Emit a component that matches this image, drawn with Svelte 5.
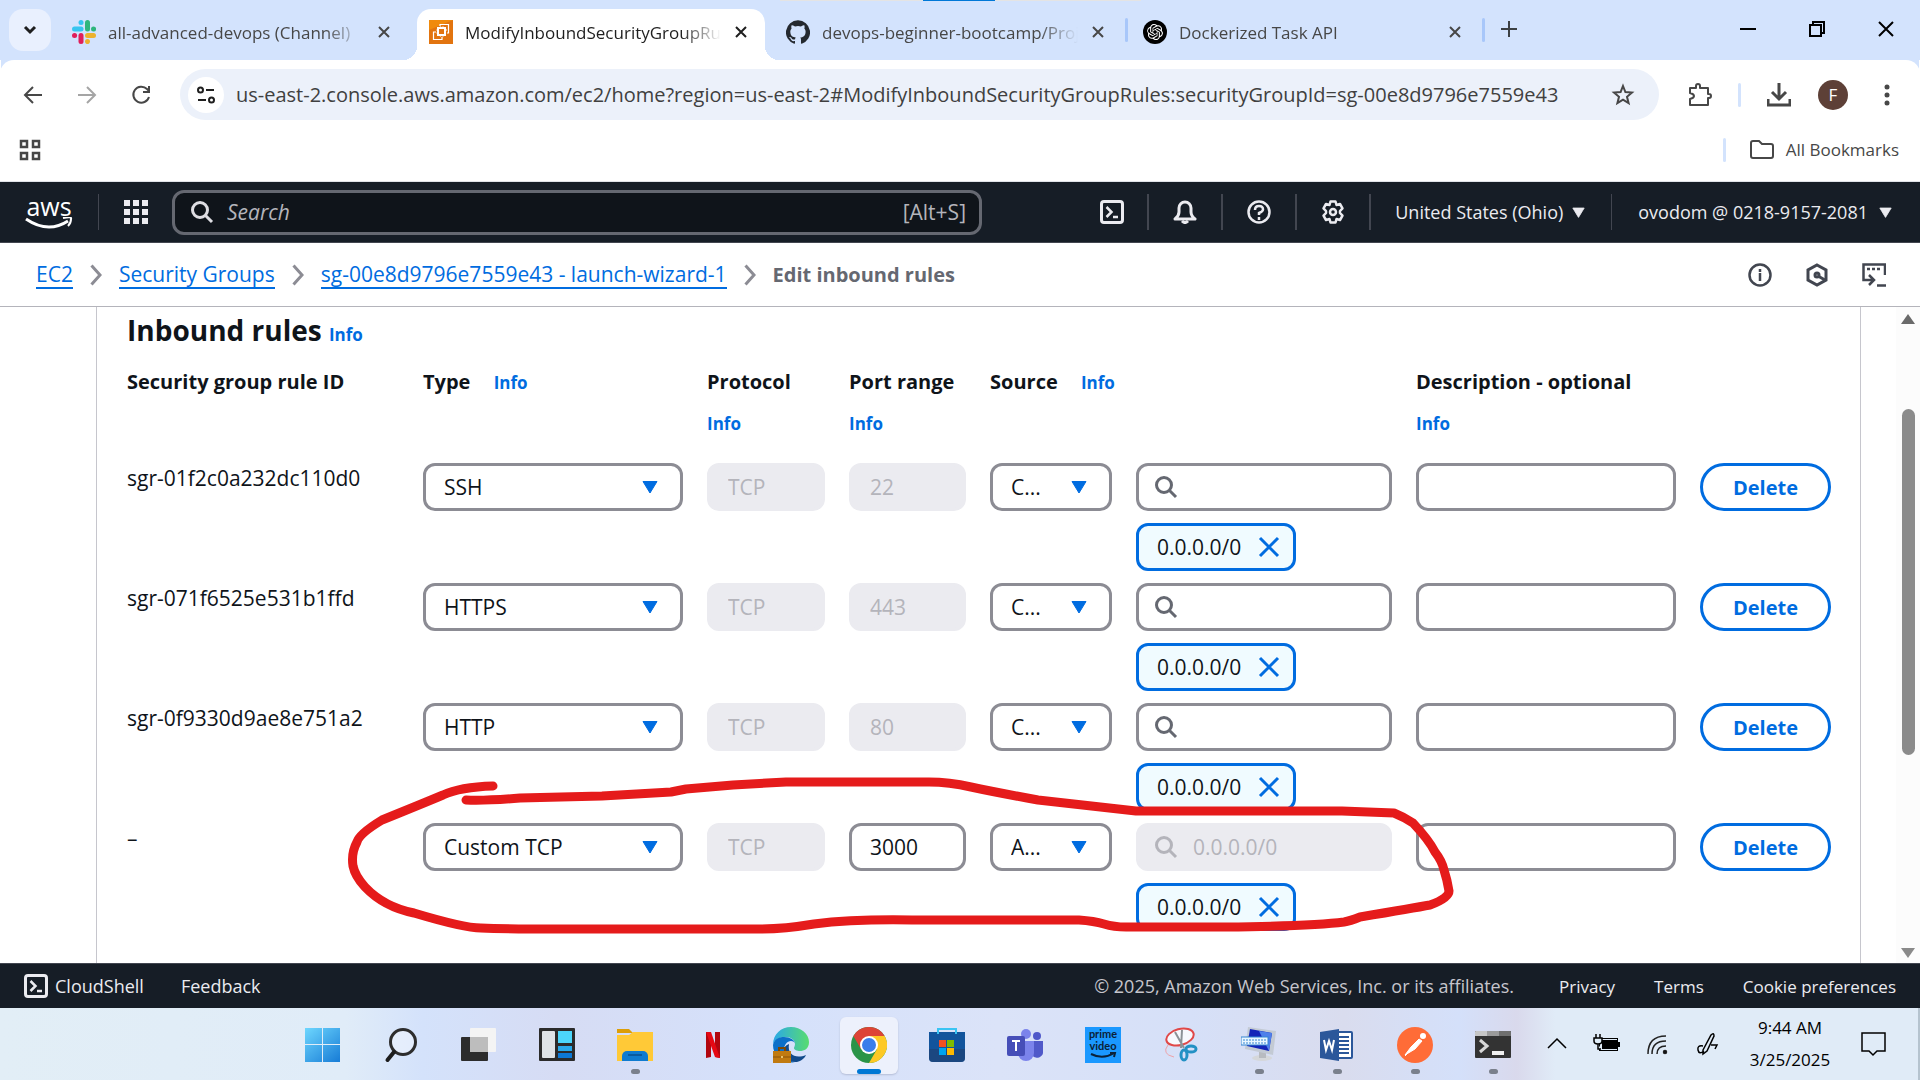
<script>
  const tabs = [
    { title: 'all-advanced-devops (Channel)', icon: 'slack', active: false, sep: false },
    { title: 'ModifyInboundSecurityGroupRules', icon: 'ec2', active: true, sep: false },
    { title: 'devops-beginner-bootcamp/Projects', icon: 'github', active: false, sep: true },
    { title: 'Dockerized Task API', icon: 'openai', active: false, sep: true }
  ];
  const url =
    'us-east-2.console.aws.amazon.com/ec2/home?region=us-east-2#ModifyInboundSecurityGroupRules:securityGroupId=sg-00e8d9796e7559e43';

  const rules = [
    { id: 'sgr-01f2c0a232dc110d0', type: 'SSH', port: '22', source: 'C...', custom: false },
    { id: 'sgr-071f6525e531b1ffd', type: 'HTTPS', port: '443', source: 'C...', custom: false },
    { id: 'sgr-0f9330d9ae8e751a2', type: 'HTTP', port: '80', source: 'C...', custom: false },
    { id: '–', type: 'Custom TCP', port: '3000', source: 'A...', custom: true }
  ];

  const apps = [
    { name: 'Start', icon: 'start' },
    { name: 'Search', icon: 'find' },
    { name: 'Task view', icon: 'taskview' },
    { name: 'Widgets', icon: 'widgets' },
    { name: 'File Explorer', icon: 'explorer', open: true },
    { name: 'Netflix', icon: 'netflix' },
    { name: 'Edge', icon: 'edge' },
    { name: 'Chrome', icon: 'chrome', current: true },
    { name: 'Store', icon: 'store' },
    { name: 'Teams', icon: 'teams' },
    { name: 'Prime Video', icon: 'prime' },
    { name: 'Snipping Tool', icon: 'snip' },
    { name: 'On-Screen Keyboard', icon: 'osk', open: true },
    { name: 'Word', icon: 'word', open: true },
    { name: 'Postman', icon: 'postman', open: true },
    { name: 'Terminal', icon: 'terminal', open: true }
  ];
</script>

{#snippet cross()}
  <svg class="i16" viewBox="0 0 16 16"><path d="M3 3l10 10M13 3L3 13" fill="none" stroke="currentColor" stroke-width="2" /></svg>
{/snippet}

{#snippet favicon(kind)}
  <svg class="i24" viewBox="0 0 24 24">
    {#if kind === 'slack'}
      <g fill="none" stroke-width="5" stroke-linecap="round">
        <path d="M9 9H2.500" stroke="#36c5f0" /><path d="M9 2.500v.1" stroke="#36c5f0" />
        <path d="M15.500 9V2.500" stroke="#2eb67d" /><path d="M21.500 9h.1" stroke="#2eb67d" />
        <path d="M15.500 15.500h6" stroke="#ecb22e" /><path d="M15.500 21.500v.1" stroke="#ecb22e" />
        <path d="M9 15.500v6" stroke="#e01e5a" /><path d="M2.500 15.500h.1" stroke="#e01e5a" />
      </g>
    {:else if kind === 'ec2'}
      <rect width="24" height="24" fill="#f08a0c" />
      <path d="M0 24V10L24 0v24z" fill="#d86613" opacity=".6" />
      <g fill="none" stroke="#fff" stroke-width="1.200">
        <rect x="9" y="8" width="7" height="7" stroke-width="2" />
        <path d="M11 6V4.500h8.500V13H18M7 12H4.500v7.500H13V17M11.500 8V6.500M14 8V6.500M11.500 15v1.500M14 15v1.500M7.500 10H9M7.500 13H9M16.500 10H18" />
      </g>
    {:else if kind === 'github'}
      <path fill="#24292f" d="M12 .3a12 12 0 0 0-3.800 23.400c.6.1.8-.3.8-.6v-2c-3.300.7-4-1.600-4-1.600-.6-1.400-1.400-1.800-1.400-1.800-1-.7.1-.7.1-.7 1.200 0 1.900 1.200 1.900 1.200 1 1.800 2.800 1.300 3.500 1 0-.8.4-1.300.7-1.600-2.700-.3-5.500-1.300-5.500-6 0-1.200.5-2.300 1.300-3.100-.2-.4-.6-1.600 0-3.200 0 0 1-.3 3.400 1.200a11.500 11.500 0 0 1 6 0c2.300-1.500 3.300-1.200 3.300-1.200.6 1.600.2 2.800 0 3.200.9.8 1.300 1.900 1.300 3.200 0 4.600-2.800 5.600-5.500 5.900.5.4.9 1 .9 2.200v3.300c0 .3.1.7.8.6A12 12 0 0 0 12 .3" />
    {:else}
      <circle cx="12" cy="12" r="12" fill="#000" />
      <path transform="translate(4 4) scale(.667)" fill="#fff" d="M22.282 9.821a5.985 5.985 0 0 0-.516-4.910 6.046 6.046 0 0 0-6.510-2.900A6.065 6.065 0 0 0 4.981 4.182a5.985 5.985 0 0 0-3.998 2.900 6.046 6.046 0 0 0 .743 7.097 5.980 5.980 0 0 0 .510 4.911 6.051 6.051 0 0 0 6.515 2.900A5.985 5.985 0 0 0 13.260 24a6.056 6.056 0 0 0 5.772-4.206 5.990 5.990 0 0 0 3.998-2.900 6.056 6.056 0 0 0-.748-7.073zM13.260 22.430a4.476 4.476 0 0 1-2.876-1.040l.141-.081 4.779-2.758a.795.795 0 0 0 .393-.681v-6.737l2.020 1.169a.071.071 0 0 1 .038.052v5.583a4.504 4.504 0 0 1-4.495 4.493zM3.600 18.304a4.471 4.471 0 0 1-.535-3.014l.142.085 4.783 2.759a.771.771 0 0 0 .780 0l5.843-3.369v2.332a.080.080 0 0 1-.033.062L9.740 19.950a4.499 4.499 0 0 1-6.140-1.646zM2.340 7.896a4.485 4.485 0 0 1 2.366-1.973V11.600a.766.766 0 0 0 .388.677l5.815 3.354-2.020 1.169a.076.076 0 0 1-.071 0l-4.830-2.787A4.504 4.504 0 0 1 2.340 7.872zm16.597 3.855l-5.833-3.387L15.119 7.200a.076.076 0 0 1 .071 0l4.830 2.791a4.494 4.494 0 0 1-.676 8.105v-5.678a.790.790 0 0 0-.407-.667zm2.010-3.023l-.141-.085-4.774-2.782a.776.776 0 0 0-.785 0L9.409 9.230V6.897a.066.066 0 0 1 .028-.061l4.830-2.787a4.499 4.499 0 0 1 6.680 4.660zm-12.640 4.135l-2.020-1.164a.080.080 0 0 1-.038-.057V6.075a4.499 4.499 0 0 1 7.376-3.454l-.142.081L8.704 5.460a.795.795 0 0 0-.393.681zm1.097-2.365l2.602-1.500 2.607 1.500v2.999l-2.597 1.500-2.607-1.500z" />
    {/if}
  </svg>
{/snippet}

{#snippet shell()}
  <svg class="i24" viewBox="0 0 24 24" fill="none" stroke="currentColor" stroke-width="3">
    <rect x="1.500" y="1.500" width="21" height="21" rx="2.500" />
    <path d="M6.500 7l5 5-5 5M13 17h5" stroke-width="2.500" />
  </svg>
{/snippet}

{#snippet lens()}
  <svg class="i24" viewBox="0 0 24 24" fill="none" stroke="currentColor" stroke-width="3"><circle cx="10" cy="10" r="7.500" /><path d="M15.500 15.500L22 22" /></svg>
{/snippet}

{#snippet caret()}
  <svg class="i16" viewBox="0 0 16 16" aria-hidden="true"><path d="M1 2.500h14L8 14z" fill="currentColor" stroke="currentColor" stroke-linejoin="round" /></svg>
{/snippet}

{#snippet chevron()}
  <svg class="chev" viewBox="0 0 12 22" aria-hidden="true"><path d="M1.500 1.500L10 11l-8.500 9.500" fill="none" stroke="#8c8c94" stroke-width="3" /></svg>
{/snippet}

{#snippet appIcon(kind)}
  <svg class="i36" viewBox="0 0 36 36">
    {#if kind === 'start'}
      <defs><linearGradient id="win" gradientUnits="userSpaceOnUse" x1="0" y1="0" x2="30" y2="36"><stop offset="0" stop-color="#6fd8ff" /><stop offset="1" stop-color="#1b80d8" /></linearGradient></defs>
      <path d="M0 1h17v16H0zM18 1h17v16H18zM0 18h17v17H0zM18 18h17v17H18z" fill="url(#win)" />
    {:else if kind === 'find'}
      <circle cx="20" cy="15" r="12.500" fill="#fff" fill-opacity=".35" stroke="#2d2d2d" stroke-width="3" /><path d="M11 25l-6.500 8" stroke="#1d1d1d" stroke-width="4" stroke-linecap="round" />
    {:else if kind === 'taskview'}
      <rect y="10" width="27" height="24" rx="1" fill="#2c2c2c" /><rect x="9" y="1" width="26" height="24" rx="1" fill="#f4f4f4" /><path d="M9 10h18v15H9z" fill="#bdbdbd" />
    {:else if kind === 'widgets'}
      <rect y="1" width="36" height="33" rx="1" fill="#2b2b2b" /><rect x="3" y="4" width="13" height="27" rx="1" fill="#dfe3e6" /><path d="M19 4h14v12H19z" fill="#4cd6fb" /><path d="M19 19h14v5H19z" fill="#29a9ea" /><path d="M19 26h14v5H19z" fill="#0c78d5" />
    {:else if kind === 'explorer'}
      <path d="M0 2h12l4 4H0z" fill="#dd9e08" /><path d="M0 8h12l4-3h20v29H0z" fill="#ffc937" /><path d="M5 34v-5a5 5 0 0 1 5-5h16a5 5 0 0 1 5 5v5z" fill="#0f7bd0" /><path d="M11 28h14" stroke="#0a5a9f" stroke-width="2" />
    {:else if kind === 'netflix'}
      <path d="M11 5h5v25l-5 1z" fill="#b1060f" /><path d="M20 5h5v26l-5-1z" fill="#b1060f" /><path d="M11 5h5l9 26-5-1z" fill="#e50914" />
    {:else if kind === 'edge'}
      <defs><linearGradient id="eg" x1="0" y1="0" x2="1" y2="0"><stop offset="0" stop-color="#2aa8e8" /><stop offset="1" stop-color="#58dc70" /></linearGradient></defs>
      <path d="M0 18C0 7 8 0 18 0s18 7 18 15c0 7-5 9-9 9-3 0-6-1-6-3 0-1 1-2 1-4 0-4-4-7-9-7C7 10 1 12 0 18z" fill="url(#eg)" />
      <path d="M0 18c1-6 6-8 11-8 6 0 11 3 11 7 0-2-2-3-4-3-4 0-7 4-7 9 0 6 4 11 11 12C10 38 0 29 0 18z" fill="#0c6fc8" />
      <path d="M11 23c0 7 5 13 13 12 4-1 8-4 9-7-10 4-19 0-17-11-3 1-5 3-5 6z" fill="#114a8b" />
      <path d="M0 24h18v12H0z" fill="#c07a10" /><path d="M6 24v-3h6v3" fill="none" stroke="#7a4604" stroke-width="2" /><path d="M0 30h18" stroke="#8a5208" /><circle cx="9" cy="30" r="1" fill="#ffe08a" />
    {:else if kind === 'chrome'}
      <circle cx="18" cy="18" r="18" fill="#2a9448" />
      <path d="M2.400 9A18 18 0 0 1 33.600 9H18l-7.800 13.500z" fill="#dd4436" /><path d="M33.600 9A18 18 0 0 1 18 36l7.800-13.500L18 9z" fill="#fdc925" /><circle cx="18" cy="18" r="9" fill="#fff" /><circle cx="18" cy="18" r="7" fill="#3a7dea" />
    {:else if kind === 'store'}
      <path d="M0 5h36v26a4 4 0 0 1-4 4H4a4 4 0 0 1-4-4z" fill="#12549c" /><path d="M0 22h36v9a4 4 0 0 1-4 4H4a4 4 0 0 1-4-4z" fill="#22406e" opacity=".6" /><path d="M9 7V2h18v5" fill="none" stroke="#3ac4f3" stroke-width="2" />
      <path d="M10 13h7v7h-7z" fill="#f25022" /><path d="M18 13h7v7h-7z" fill="#7fba00" /><path d="M10 21h7v7h-7z" fill="#00a4ef" /><path d="M18 21h7v7h-7z" fill="#ffb900" />
    {:else if kind === 'teams'}
      <circle cx="30" cy="9" r="4" fill="#5059c9" /><circle cx="19" cy="7" r="5" fill="#7b83eb" /><path d="M25 14h11v10a6 6 0 0 1-11 4z" fill="#5059c9" /><path d="M11 14h16v12a8 8 0 0 1-16 0z" fill="#7b83eb" /><rect y="9" width="18" height="20" rx="2" fill="#464eb8" /><path d="M5 14h8M9 14v10" stroke="#fff" stroke-width="2" />
    {:else if kind === 'prime'}
      <rect width="36" height="36" fill="#1a98ff" /><text x="18" y="11" class="ptext">prime</text><text x="18" y="23" class="ptext">video</text><path d="M6 27q12 6 23-1M25 26h5l-1 4" fill="none" stroke="#0b2239" stroke-width="2" />
    {:else if kind === 'snip'}
      <ellipse cx="17" cy="10" rx="14" ry="8" fill="#fff" fill-opacity=".8" stroke="#e04848" stroke-width="2" transform="rotate(-15 17 10)" /><path d="M5 18q-7 9 6 12" fill="none" stroke="#eea2a8" />
      <path d="M12 5l9 16M19 3l-1 18" stroke="#8c9297" stroke-width="2" /><g fill="none" stroke="#2391c4" stroke-width="3"><ellipse cx="21" cy="28" rx="3" ry="5" /><ellipse cx="28" cy="22" rx="5" ry="3" /></g>
    {:else if kind === 'osk'}
      <ellipse cx="21" cy="31" rx="10" ry="3" fill="#d5d7da" /><path d="M18 25h7v6h-7z" fill="#b8bbc0" /><path d="M7 0l28 4-3 24L4 22z" fill="#c3cad4" /><path d="M9 2l22 4-3 18L6 19z" fill="#1424b8" /><path d="M18 4l13 2-3 18z" fill="#4f80ea" /><rect y="10" width="27" height="8" fill="#e9f6ff" stroke="#3486d2" /><path d="M2 13h23M2 16h23" stroke="#3486d2" stroke-dasharray="2 1" />
    {:else if kind === 'word'}
      <rect x="15" y="5" width="18" height="26" rx="1" fill="#fff" stroke="#2b579a" stroke-width="2" /><path d="M20 10h10M20 14h10M20 18h10M20 22h10M20 26h10" stroke="#2b579a" stroke-width="2" /><path d="M1 5l19-3v32L1 31z" fill="#2b579a" /><path d="M5 13l2 10 3-9 3 9 2-10" fill="none" stroke="#fff" stroke-width="2" />
    {:else if kind === 'postman'}
      <circle cx="18" cy="18" r="18" fill="#ff6c37" /><circle cx="26" cy="9" r="3" fill="#fff" /><path d="M22 12l3 2-7 8-10 6 6-8zM17 20l-9 9" fill="#fff" stroke="#fff" />
    {:else}
      <rect y="4" width="36" height="27" rx="1" fill="#333" /><path d="M0 9V5q0-1 1-1h11v5z" fill="#c6c6c6" /><path d="M12 4h12v5H12z" fill="#9a9a9a" /><path d="M24 4h11q1 0 1 1v4H24z" fill="#6f6f6f" /><path d="M5 13l7 6-7 6" fill="none" stroke="#d8d8d8" stroke-width="3" /><path d="M17 24h12v4H17z" fill="#f0f0f0" />
    {/if}
  </svg>
{/snippet}

<div class="screen">
  <div class="notch" aria-hidden="true"></div>
  <div class="tabstrip">
    <button class="tabmenu" aria-label="Search tabs">
      <svg class="i16" viewBox="0 0 16 16"><path d="M3 5l5 5 5-5" fill="none" stroke="#1f1f1f" stroke-width="3" /></svg>
    </button>
    {#each tabs as t}
      <div class="tab" class:active={t.active} class:sep={t.sep}>
        {@render favicon(t.icon)}
        <span class="title">{t.title}</span>
        <button class="tabclose" aria-label="Close tab">{@render cross()}</button>
      </div>
    {/each}
    <button class="newtab" aria-label="New tab"><svg class="i16" viewBox="0 0 16 16"><path d="M8 0v16M0 8h16" stroke="#3c4043" stroke-width="2" /></svg></button>
    <div class="wincontrols">
      <button aria-label="Minimize"><svg class="i16" viewBox="0 0 16 16"><path d="M0 8h16" stroke="#000" stroke-width="2" /></svg></button>
      <button aria-label="Restore"><svg class="i16" viewBox="0 0 16 16"><path d="M1 4h11v11H1zM4 4V1h11v11h-3" fill="none" stroke="#000" stroke-width="2" /></svg></button>
      <button aria-label="Close"><svg class="i16" viewBox="0 0 16 16"><path d="M1 1l14 14M15 1L1 15" stroke="#000" stroke-width="2" /></svg></button>
    </div>
  </div>

  <div class="toolbar">
    <button class="nav" aria-label="Back"><svg class="i24" viewBox="0 0 24 24"><path d="M21 12H4M12 4l-8 8 8 8" fill="none" stroke="#474747" stroke-width="2" /></svg></button>
    <button class="nav" aria-label="Forward"><svg class="i24" viewBox="0 0 24 24"><path d="M3 12h17M12 4l8 8-8 8" fill="none" stroke="#a5a5a5" stroke-width="2" /></svg></button>
    <button class="nav" aria-label="Reload"><svg class="i24" viewBox="0 0 24 24"><path d="M20 14a8 8 0 1 1-2-8l2 2M20 3v6h-6" fill="none" stroke="#474747" stroke-width="2" /></svg></button>
    <div class="omnibox">
      <button class="site" aria-label="Site information"><svg class="i20" viewBox="0 0 20 20" fill="none" stroke="#1f1f1f" stroke-width="2"><circle cx="4.500" cy="5" r="2.500" /><path d="M10 5h8M2 15h8" /><circle cx="15.500" cy="15" r="2.500" /></svg></button>
      <input class="url" type="text" aria-label="Address" value={url} />
      <button class="star" aria-label="Bookmark this tab"><svg class="i24" viewBox="0 0 24 24"><path d="M12 3l2.400 6 6.600.5-5 4.300 1.600 6.400-5.600-3.500-5.600 3.500L8 13.800 3 9.500 9.600 9z" fill="none" stroke="#474747" stroke-width="2" /></svg></button>
    </div>
    <div class="tools">
      <button class="nav" aria-label="Extensions"><svg class="i24" viewBox="0 0 24 24"><path d="M2 5h6V3a2 2 0 0 1 4 0v2h8v6h1a2 2 0 0 1 0 4h-1v7H2v-6q4-1 4-3t-4-3z" fill="none" stroke="#474747" stroke-width="2" stroke-linejoin="round" /></svg></button>
      <span class="bar"></span>
      <button class="nav" aria-label="Downloads"><svg class="i24" viewBox="0 0 24 24"><path d="M12 0v15M5 9l7 7 7-7M1 16v6h22v-6" fill="none" stroke="#474747" stroke-width="3" /></svg></button>
      <button class="nav" aria-label="Profile"><span class="avatar">F</span></button>
      <button class="nav" aria-label="Menu"><svg class="i24" viewBox="0 0 24 24" fill="#474747"><circle cx="12" cy="4" r="2.500" /><circle cx="12" cy="12" r="2.500" /><circle cx="12" cy="20" r="2.500" /></svg></button>
    </div>
  </div>

  <div class="bookmarks">
    <button aria-label="Apps"><svg class="i24" viewBox="0 0 24 24"><path d="M3 3h6v6H3zM15 3h6v6h-6zM3 15h6v6H3zM15 15h6v6h-6z" fill="none" stroke="#474747" stroke-width="2.500" /></svg></button>
    <span class="bar push"></span>
    <button class="allbm"><svg class="i24" viewBox="0 0 24 24"><path d="M1 5q0-2 2-2h6l3 3h9q2 0 2 2v10q0 2-2 2H3q-2 0-2-2z" fill="none" stroke="#474747" stroke-width="2" /></svg>All Bookmarks</button>
  </div>

  <header class="aws">
    <a class="logo" href="#home" aria-label="AWS home">
      <span>aws</span>
      <svg viewBox="0 0 48 12"><path d="M1 2q22 15 42 2" fill="none" stroke="#fff" stroke-width="3" /><path d="M38 1q9-2 8 1 0 4-3 7" fill="none" stroke="#fff" stroke-width="2" /></svg>
    </a>
    <span class="vline"></span>
    <button class="grid9" aria-label="Services"><svg class="i24" viewBox="0 0 24 24"><path d="M0 0h6v6H0zM9 0h6v6H9zM18 0h6v6h-6zM0 9h6v6H0zM9 9h6v6H9zM18 9h6v6h-6zM0 18h6v6H0zM9 18h6v6H9zM18 18h6v6h-6z" fill="currentColor" /></svg></button>
    <label class="search">
      {@render lens()}
      <input type="text" aria-label="Search" placeholder="Search" />
      <span>[Alt+S]</span>
    </label>
    <div class="acts">
      <button class="act" aria-label="CloudShell">{@render shell()}</button>
      <button class="act" aria-label="Notifications"><svg class="i24" viewBox="0 0 24 24" fill="none" stroke="currentColor" stroke-width="3"><path d="M2 19q4-3 4-7V8a6 6 0 0 1 12 0v4q0 4 4 7z" stroke-linejoin="round" /><path d="M9 21q3 3 6 0" /></svg></button>
      <button class="act" aria-label="Help"><svg class="i24" viewBox="0 0 24 24" fill="none" stroke="currentColor" stroke-width="2.500"><circle cx="12" cy="12" r="10.500" /><path d="M8 10q0-4 4-4t4 3.500q0 2-4 3.500v2M12 17v3" /></svg></button>
      <button class="act" aria-label="Settings"><svg class="i24" viewBox="0 0 24 24" fill="none" stroke="currentColor" stroke-width="2.500" stroke-linejoin="round"><path d="M9.500 1.500h5l1 3.500 3.500-1 2.500 4.300-2.500 2.700v2l2.500 2.700-2.500 4.300-3.500-1-1 3.500h-5l-1-3.500-3.500 1-2.500-4.300L5 13v-2L2.500 8.300 5 4l3.500 1z" /><circle cx="12" cy="12" r="3" /></svg></button>
      <button class="menu region">United States (Ohio) {@render caret()}</button>
      <button class="menu account">ovodom @ 0218-9157-2081 {@render caret()}</button>
    </div>
  </header>

  <nav class="crumbs">
    <a href="#ec2">EC2</a>{@render chevron()}
    <a href="#groups">Security Groups</a>{@render chevron()}
    <a href="#group">sg-00e8d9796e7559e43 - launch-wizard-1</a>{@render chevron()}
    <strong>Edit inbound rules</strong>
    <div class="side">
      <button aria-label="Info panel"><svg class="i24" viewBox="0 0 24 24" fill="none" stroke="currentColor" stroke-width="2.500"><circle cx="12" cy="12" r="10.500" /><path d="M12 10v8M12 6v3" /></svg></button>
      <button aria-label="Diagnostics"><svg class="i24" viewBox="0 0 24 24" fill="none" stroke="currentColor" stroke-width="3"><path d="M12 2l9 5v10l-9 5-9-5V7z" /><circle cx="12" cy="12" r="2" /><path d="M13 13l7 4" /></svg></button>
      <button aria-label="Open shell"><svg class="i24" viewBox="0 0 24 24" fill="none" stroke="currentColor" stroke-width="2.500"><path d="M23 12V1.500H1.500V17H12M7 12l5 5-5 5M15 22.500h9M5 6h3M10 6h3M15 6h3" /></svg></button>
    </div>
  </nav>

  <main>
    <section class="panel">
      <h2>Inbound rules <a href="#info">Info</a></h2>
      <table>
        <colgroup>
          <col class="c1" /><col class="c2" /><col class="c3" /><col class="c4" /><col class="c5" /><col class="c6" /><col class="c7" /><col class="c8" />
        </colgroup>
        <thead>
          <tr>
            <th>Security group rule ID</th>
            <th>Type <a class="inl" href="#type">Info</a></th>
            <th>Protocol <a class="below" href="#protocol">Info</a></th>
            <th>Port range <a class="below" href="#port">Info</a></th>
            <th colspan="2">Source <a class="inl" href="#source">Info</a></th>
            <th>Description - optional <a class="below" href="#description">Info</a></th>
            <th></th>
          </tr>
        </thead>
        <tbody>
          {#each rules as r}
            <tr>
              <td class="rid">{r.id}</td>
              <td><div class="sel"><select aria-label="Type"><option>{r.type}</option></select>{@render caret()}</div></td>
              <td><input class="box" type="text" aria-label="Protocol" value="TCP" disabled /></td>
              <td><input class="box" type="text" aria-label="Port range" value={r.port} disabled={!r.custom} /></td>
              <td><div class="sel"><select aria-label="Source type"><option>{r.source}</option></select>{@render caret()}</div></td>
              <td>
                <div class="cidr" class:off={r.custom}>{@render lens()}<input type="text" aria-label="Source" placeholder={r.custom ? '0.0.0.0/0' : ''} disabled={r.custom} /></div>
                <div class="chip">0.0.0.0/0<button aria-label="Remove 0.0.0.0/0"><svg class="i24" viewBox="0 0 24 24"><path d="M3 3l18 18M21 3L3 21" stroke="currentColor" stroke-width="3" /></svg></button></div>
              </td>
              <td><input class="box" type="text" aria-label="Description" /></td>
              <td><button class="del">Delete</button></td>
            </tr>
          {/each}
        </tbody>
      </table>
      <svg class="ink" viewBox="0 0 1110 160" aria-hidden="true">
        <path d="M149 11Q116 12 99 20Q80 28 38 45Q15 59 13 67Q7 78 9 91Q11 101 21 112Q40 132 70 138Q120 153 137 153Q160 154 213 154H417Q440 154 470 149Q510 144 568 145H735Q750 146 760 149Q770 152 782 152H882Q970 151 1000 147Q1006 146 1016 142Q1070 133 1086 130Q1105 123 1105 116Q1103 104 1100 95Q1098 86 1091 77Q1085 65 1069 48Q1060 42 1050 38L998 36H792L694 25Q650 17 627 12Q605 7 585 7H442L389 10L342 14L327 17L258 21L176 23Q140 26 122 25" fill="none" stroke="#e51b1b" stroke-width="9" stroke-linecap="round" stroke-linejoin="round" />
      </svg>
    </section>
    <div class="scroll" aria-hidden="true">
      <svg class="i16" viewBox="0 0 16 16"><path d="M8 3L1 13h14z" fill="#6a6a6a" /></svg>
      <span></span>
      <svg class="i16" viewBox="0 0 16 16"><path d="M8 13L1 3h14z" fill="#8a8a8a" /></svg>
    </div>
  </main>

  <footer>
    <button class="cs">{@render shell()}CloudShell</button>
    <button>Feedback</button>
    <span class="copy">© 2025, Amazon Web Services, Inc. or its affiliates.</span>
    <a href="#privacy">Privacy</a>
    <a href="#terms">Terms</a>
    <a href="#cookies">Cookie preferences</a>
  </footer>

  <div class="taskbar">
    <div class="apps">
      {#each apps as a}
        <button class="app" class:open={a.open} class:current={a.current} aria-label={a.name}>{@render appIcon(a.icon)}</button>
      {/each}
    </div>
    <div class="tray">
      <button aria-label="Hidden icons"><svg class="i24" viewBox="0 0 24 24"><path d="M3 16l9-9 9 9" fill="none" stroke="#000" stroke-width="1.500" /></svg></button>
      <button aria-label="Battery"><svg class="i28" viewBox="0 0 28 28"><rect x="6.500" y="8.500" width="18" height="12" fill="none" stroke="#000" /><path d="M9 10h15v9H9zM25 12h2v5h-2z" /><path d="M3 4v4M7 4v4M1 8h8v3q0 3-4 3t-4-3zM5 14v5h3" fill="#e0edf8" stroke="#000" stroke-width="1.500" /></svg></button>
      <button aria-label="Network"><svg class="i24" viewBox="0 0 24 24" fill="none" stroke="#222" stroke-width="1.500"><path d="M3 22Q3 4 21 4M7 22Q7 9 21 9M12 22q0-8 9-8" /><circle cx="20" cy="20" r="1.500" fill="#000" /></svg></button>
      <button aria-label="Pen"><svg class="i24" viewBox="0 0 24 24" fill="none" stroke="#000" stroke-width="1.500"><path d="M8 18L16 3q3-3 3 1l-7 15-4 3zM8 14q-6-1-5 4t6 1M16 13h6l-2 4" /></svg></button>
      <div class="clock"><span>9:44 AM</span><span>3/25/2025</span></div>
      <button aria-label="Notifications"><svg class="i28" viewBox="0 0 28 28"><path d="M3 3h23v18h-8l-4 4-4-4H3z" fill="none" stroke="#000" stroke-width="1.500" /></svg></button>
    </div>
  </div>
</div>

<style>
  :global(body) { margin: 0; background: #fff; }
  .screen { min-height: 100vh; display: flex; flex-direction: column; font-family: 'Open Sans', 'Noto Sans', sans-serif; font-size: 21px; color: #0f141a; background: #fff; }
  .screen * { box-sizing: border-box; }
  button, input, select { font: inherit; color: inherit; background: none; border: 0; padding: 0; margin: 0; outline: 0; }
  button { display: inline-flex; align-items: center; justify-content: center; }
  svg { flex: none; display: block; }
  a { color: #006ce0; text-decoration: none; }
  .i16 { width: 16px; height: 16px; }
  .i20 { width: 20px; height: 20px; }
  .i24 { width: 24px; height: 24px; }
  .i28 { width: 28px; height: 28px; }
  .i36 { width: 36px; height: 36px; }

  .notch { position: absolute; z-index: 2; top: 0; left: 780px; width: 361px; height: 1px; background: linear-gradient(90deg, #e4e4e4 143px, #0078d7 143px 215px, #e4e4e4 215px); }
  .tabstrip { position: relative; z-index: 1; display: flex; height: 60px; background: #d3e3fd; padding: 9px 0 0 9px; }
  .tabmenu { width: 42px; height: 42px; border-radius: 14px; background: #e9f0fe; margin-right: 9px; }
  .tab { position: relative; display: flex; align-items: center; width: 348px; height: 51px; margin-right: 9px; padding: 0 16px 5px 12px; gap: 12px; font-size: 17px; color: #474747; border-radius: 14px 14px 0 0; }
  .tab.active { background: #fff; color: #1f1f1f; }
  .tab.active::before, .tab.active::after { content: ''; position: absolute; bottom: 0; width: 14px; height: 14px; }
  .tab.active::before { left: -14px; background: radial-gradient(circle at 0 0, transparent 14px, #fff 14px); }
  .tab.active::after { right: -14px; background: radial-gradient(circle at 100% 0, transparent 14px, #fff 14px); }
  .tab.sep::after { content: ''; position: absolute; right: -6px; top: 9px; width: 3px; height: 24px; border-radius: 2px; background: #a8c7fa; }
  .title { flex: 1; overflow: hidden; white-space: nowrap; mask-image: linear-gradient(90deg, #000 calc(100% - 40px), transparent); }
  .newtab { width: 42px; height: 42px; padding-bottom: 3px; }
  .tabclose { width: 16px; height: 16px; }
  .wincontrols { display: flex; margin-left: auto; height: 42px; }
  .wincontrols button { width: 69px; padding-bottom: 3px; }

  .toolbar { display: flex; align-items: center; height: 69px; padding: 0 6px; background: #fff; border-radius: 14px 14px 0 0; box-shadow: 0 -16px 0 -1px #d3e3fd; }
  .nav { width: 54px; height: 48px; }
  .omnibox { flex: 1; display: flex; align-items: center; height: 51px; margin: 0 14px 0 12px; padding: 0 24px 0 8px; border-radius: 26px; background: #ecf1fa; }
  .site { width: 36px; height: 36px; border-radius: 18px; background: #fff; }
  .url { flex: 1; min-width: 0; margin-left: 12px; font-size: 20px; color: #404040; }
  .tools { display: flex; align-items: center; }
  .bar { width: 3px; height: 24px; margin: 0 11px; border-radius: 2px; background: #d3e3fd; }
  .avatar { width: 30px; height: 30px; border-radius: 15px; background: #5d4037; color: #fff; font-size: 17px; line-height: 30px; }
  .bookmarks { display: flex; align-items: center; height: 53px; padding: 0 21px 11px 18px; border-bottom: 1px solid #e0e3e8; }
  .push { margin: 0 24px 0 auto; }
  .allbm { gap: 12px; font-size: 17px; color: #474747; }

  .aws { display: flex; align-items: center; height: 61px; background: #161d26; border-bottom: 1px solid #424650; color: #ebebf0; }
  .logo { display: flex; flex-direction: column; align-items: center; width: 98px; color: #fff; }
  .logo span { font-size: 25px; line-height: 22px; font-weight: 500; }
  .logo svg { width: 48px; height: 12px; }
  .vline { width: 1px; height: 36px; background: #424650; }
  .grid9 { width: 73px; height: 48px; }
  .search { display: flex; align-items: center; flex: 0 1 810px; height: 45px; padding: 0 13px 0 15px; gap: 13px; border: 3px solid #656871; border-radius: 12px; background: #0f141a; color: #b4b4bb; }
  .search :global(svg) { color: #dedee3; }
  .search input { flex: 1; min-width: 0; font-style: italic; }
  .search input::placeholder, .cidr input::placeholder { color: inherit; opacity: 1; }
  .acts { display: flex; align-items: center; margin-left: auto; }
  .act { width: 74px; height: 36px; border-right: 2px solid #424650; }
  .act:first-child { padding-left: 2px; }
  .menu { height: 36px; padding: 0 26px; gap: 9px; font-size: 18px; font-weight: 500; white-space: nowrap; }
  .menu :global(svg) { width: 13px; height: 13px; }
  .region { padding: 0 26px 0 24px; border-right: 1px solid #424650; }
  .account { padding: 0 28px 0 25px; gap: 11px; margin-left: 1px; }

  .crumbs { display: flex; align-items: center; height: 64px; padding: 0 34px 0 36px; gap: 17px; border-bottom: 1px solid #b4b4bb; }
  .crumbs a { line-height: 26px; border-bottom: 2px solid #006ce0; }
  .crumbs strong { color: #656871; font-size: 20px; font-weight: 700; }
  .chev { width: 12px; height: 22px; }
  .side { display: flex; gap: 33px; margin-left: auto; color: #424650; }

  main { flex: 1; display: flex; }
  .panel { position: relative; flex: 1; margin: 0 35px 0 96px; padding: 0 29px 20px 30px; border: 1px solid #c6c6cd; border-width: 0 1px; }
  h2 { margin: 0; height: 48px; font-size: 28px; line-height: 46px; font-weight: 700; }
  h2 a { font-size: 17px; line-height: 1; }
  table { width: 100%; table-layout: fixed; border-collapse: collapse; }
  .c1 { width: 296px; } .c2 { width: 284px; } .c3 { width: 142px; } .c4 { width: 141px; }
  .c5 { width: 146px; } .c6 { width: 280px; } .c7 { width: 284px; } .c8 { width: 131px; }
  th { height: 108px; padding: 6px 0 0; text-align: left; vertical-align: top; font-size: 20px; line-height: 42px; font-weight: 700; white-space: nowrap; }
  th a { font-size: 17px; }
  .inl { margin-left: 18px; line-height: 1; }
  .below { display: block; }
  td { height: 120px; padding: 0 24px 12px 0; vertical-align: top; }
  td:last-child { padding-right: 0; }
  td.rid { line-height: 30px; }
  .box, .sel select, .cidr, .chip { width: 100%; height: 48px; padding: 0 18px; border: 3px solid #8c8c94; border-radius: 12px; background: #fff; }
  .box { display: block; }
  .box:disabled, .cidr.off { background: #ebebf0; border-color: #ebebf0; color: #b4b4bb; }
  .sel { position: relative; }
  .sel select { appearance: none; display: block; }
  .sel :global(svg) { position: absolute; right: 25px; top: 16px; color: #006ce0; pointer-events: none; }
  .cidr { display: flex; align-items: center; padding: 0 15px; gap: 15px; color: #656871; }
  .cidr.off { color: #b4b4bb; }
  .cidr input { flex: 1; min-width: 0; }
  .chip { display: flex; align-items: center; justify-content: space-between; width: 160px; margin-top: 12px; padding-right: 12px; border-color: #006ce0; background: #f0fbff; }
  .chip button { color: #006ce0; }
  .del { width: 100%; height: 48px; border: 3px solid #006ce0; border-radius: 24px; color: #006ce0; font-size: 20px; font-weight: 700; }
  .ink { position: absolute; left: 247px; bottom: 28px; width: 1110px; height: 160px; pointer-events: none; }
  .scroll { display: flex; flex-direction: column; align-items: center; width: 24px; padding: 4px 0 2px; background: #fcfcfc; }
  .scroll span { width: 13px; height: 346px; margin: 82px 0 auto; border-radius: 7px; background: #8b8b8b; }

  footer { display: flex; align-items: center; height: 45px; padding: 0 24px; gap: 37px; background: #161d26; color: #ebebf0; font-size: 18px; border-top: 1px solid #424650; }
  footer a { color: #ebebf0; font-size: 17px; font-weight: 500; }
  footer a + a { margin-left: 2px; }
  .cs { gap: 7px; }
  .copy { margin: 0 8px 0 auto; color: #c6c6cd; }

  .taskbar { display: flex; height: 72px; justify-content: space-between; padding-left: 284px; background: linear-gradient(90deg, #e2eef6 0, #e0ecf8 18%, #d4e2fb 22%, #d6dcf4 29%, #d5e1fb 40%, #dbe3f8 52%, #d6e0f8 62%, #d9dcee 70%, #d4e0fa 76%, #d9d9ec 79%, #e0ebf7 81%); }
  .apps { display: flex; }
  .app { position: relative; width: 78px; height: 72px; padding-top: 1px; }
  .app::after { content: ''; position: absolute; bottom: 6px; width: 9px; height: 5px; border-radius: 3px; }
  .app.open::after { background: #7a808c; }
  .app.current::after { width: 24px; background: #0078d4; }
  .app.current::before { content: ''; position: absolute; left: 10px; top: 9px; width: 58px; height: 57px; border-radius: 6px; background: #edf1fc; box-shadow: 0 1px 2px #b4bdd6; }
  .app :global(svg) { position: relative; }
  .ptext { font-family: Lato, sans-serif; font-size: 11px; font-weight: 700; text-anchor: middle; fill: #0b2239; }
  .tray { display: flex; align-items: center; padding-right: 20px; margin-right: 7px; border-right: 2px solid #b5c3cf; color: #000; }
  .tray button { width: 50px; height: 48px; }
  .clock { display: flex; flex-direction: column; align-items: center; width: 116px; font-size: 17px; line-height: 32px; }
</style>
